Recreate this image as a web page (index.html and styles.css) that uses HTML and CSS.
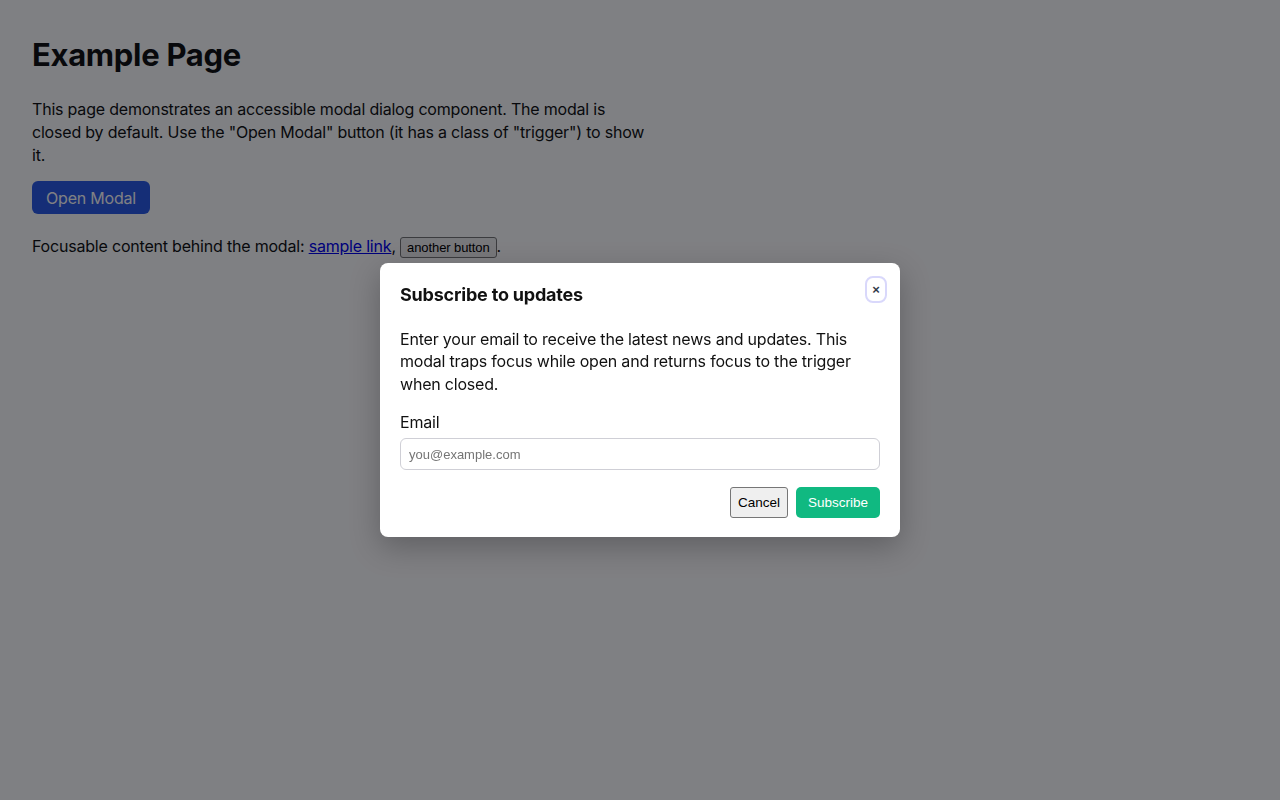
FILE: index.html
```html
<!DOCTYPE html>
<html lang="en">
<head>
<meta charset="utf-8">
<title>Example Page</title>
<link rel="stylesheet" href="styles.css">
</head>
<body>
<main class="page">
  <h1 class="title">Example Page</h1>
  <p class="intro">This page demonstrates an accessible modal dialog component. The modal is closed by default. Use the "Open Modal" button (it has a class of "trigger") to show it.</p>
  <button class="trigger" type="button">Open Modal</button>
  <p class="behind">Focusable content behind the modal: <a href="#" class="link">sample link</a>, <button class="native-btn small" type="button">another button</button>.</p>
</main>
<div class="overlay">
  <div class="modal" role="dialog" aria-modal="true" aria-labelledby="mtitle">
    <button class="close" type="button" aria-label="Close">×</button>
    <h2 class="modal-title" id="mtitle">Subscribe to updates</h2>
    <p class="modal-text">Enter your email to receive the latest news and updates. This modal traps focus while open and returns focus to the trigger when closed.</p>
    <label class="field-label" for="email">Email</label>
    <input class="field" id="email" type="email" placeholder="you@example.com">
    <div class="actions">
      <button class="native-btn cancel" type="button">Cancel</button>
      <button class="subscribe" type="button">Subscribe</button>
    </div>
  </div>
</div>
</body>
</html>
```
FILE: styles.css
```css
html, body {
  margin: 0;
  padding: 0;
  background: #ffffff;
}
body {
  font-family: Inter, "Noto Sans", sans-serif;
  color: #111111;
  font-size: 16px;
  line-height: 1.45;
}
.page {
  padding: 32px;
  max-width: 620px;
}
.title {
  font-size: 31px;
  font-weight: 700;
  letter-spacing: -0.3px;
  margin: 4px 0 24px;
  line-height: 38px;
}
.intro {
  margin: 0 0 14px;
  letter-spacing: -0.2px;
  line-height: 23px;
}
.trigger {
  font-family: Inter, sans-serif;
  font-size: 16px;
  letter-spacing: -0.2px;
  background: #2a5ae6;
  color: #ffffff;
  border: none;
  border-radius: 6px;
  height: 33px;
  padding: 0 14px;
  cursor: pointer;
}
.behind {
  margin: 21px 0 0;
  letter-spacing: -0.2px;
  line-height: 23px;
}
.link {
  color: #0000ee;
  text-decoration: underline;
}
.native-btn {
  font-family: "Liberation Sans", Arial, sans-serif;
  background: #efefef;
  border: 1px solid #767676;
  border-radius: 3px;
  color: #000000;
  cursor: pointer;
}
.small {
  font-size: 13px;
  padding: 1px 6px;
  height: 21px;
  vertical-align: 0;
  letter-spacing: -0.1px;
}
.overlay {
  position: fixed;
  inset: 0;
  background: rgba(0, 2, 8, 0.5);
  display: flex;
  align-items: center;
  justify-content: center;
}
.modal {
  position: relative;
  width: 520px;
  box-sizing: border-box;
  background: #ffffff;
  border-radius: 8px;
  padding: 20px 20px 19px;
  box-shadow: 0 10px 30px rgba(0, 0, 0, 0.25);
}
.close {
  position: absolute;
  top: 16px;
  right: 16px;
  width: 16px;
  height: 21px;
  padding: 0;
  border: none;
  background: #ffffff;
  color: #333a4a;
  font-size: 13px;
  font-weight: 700;
  line-height: 21px;
  border-radius: 5px;
  outline: 2px solid #d9d8fb;
  outline-offset: 1px;
  font-family: "Liberation Sans", Arial, sans-serif;
}
.modal-title {
  margin: 0;
  font-size: 18px;
  font-weight: 700;
  line-height: 24px;
  letter-spacing: -0.2px;
}
.modal-text {
  margin: 21px 0 16px;
  line-height: 22.5px;
  letter-spacing: -0.2px;
}
.field-label {
  display: block;
  line-height: 22px;
  margin-bottom: 5px;
  letter-spacing: -0.2px;
}
.field {
  display: block;
  width: 100%;
  box-sizing: border-box;
  height: 32px;
  border: 1px solid #cfcfd6;
  border-radius: 6px;
  padding: 0 8px;
  font-family: "Liberation Sans", Arial, sans-serif;
  font-size: 13px;
  color: #111111;
}
.field::placeholder {
  color: #757575;
}
.actions {
  display: flex;
  justify-content: flex-end;
  gap: 8px;
  margin-top: 17px;
}
.cancel {
  font-size: 13.5px;
  height: 31px;
  padding: 0 7px;
}
.subscribe {
  font-family: "Liberation Sans", Arial, sans-serif;
  font-size: 13.5px;
  height: 31px;
  padding: 0 12px;
  border: none;
  border-radius: 5px;
  background: #10b981;
  color: #ffffff;
  cursor: pointer;
}
```
